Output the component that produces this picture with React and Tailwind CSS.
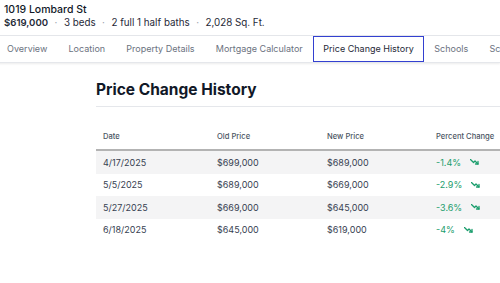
import React from "react";

const tabs = [
  "Overview",
  "Location",
  "Property Details",
  "Mortgage Calculator",
  "Price Change History",
  "Schools",
  "Schools Nearby",
];

const rows = [
  ["4/17/2025", "$699,000", "$689,000", "-1.4%"],
  ["5/5/2025", "$689,000", "$669,000", "-2.9%"],
  ["5/27/2025", "$669,000", "$645,000", "-3.6%"],
  ["6/18/2025", "$645,000", "$619,000", "-4%"],
];

function TrendDown() {
  return (
    <svg width="9" height="6" viewBox="0 0 18 12" fill="none" stroke="currentColor" strokeWidth="2.6" strokeLinecap="round" strokeLinejoin="round">
      <polyline points="1,1 7,7 10,4 16,10" />
      <polyline points="11,10 16,10 16,5" />
    </svg>
  );
}

export default function App() {
  return (
    <div className="w-[500px] h-[283px] overflow-hidden bg-white text-[#1f2937]" style={{ fontFamily: "Inter, 'Noto Sans', sans-serif" }}>
      <div className="h-[36px] border-b border-[#e5e7eb] pl-[4px] pt-[3px]">
        <div className="text-[10.5px] leading-[13px] font-medium text-[#111827]">1019 Lombard St</div>
        <div className="flex items-center text-[9.8px] leading-[13px] text-[#1f2937] whitespace-nowrap">
          <span className="font-semibold text-[9.6px]">$619,000</span>
          <span className="mx-[6.5px] text-[#9ca3af]">·</span>
          <span>3 beds</span>
          <span className="mx-[6.5px] text-[#9ca3af]">·</span>
          <span>2 full 1 half baths</span>
          <span className="mx-[6.5px] text-[#9ca3af]">·</span>
          <span>2,028 Sq. Ft.</span>
        </div>
      </div>
      <div className="h-[27px] flex items-stretch whitespace-nowrap border-b border-[#e5e7eb] shadow-[0_1px_2px_rgba(0,0,0,0.08)] ml-[-3.5px]">
        {tabs.map((t) =>
          t === "Price Change History" ? (
            <div key={t} className="px-[9px] flex items-center border-[1.5px] border-[#3340d0] text-[#1f2937] text-[9px]">
              {t}
            </div>
          ) : (
            <div key={t} className="px-[10.6px] flex items-center text-[#6b7280] text-[9px]">
              {t}
            </div>
          )
        )}
      </div>
      <div className="pl-[96px] pt-[17px]">
        <div className="text-[15.5px] leading-[20px] font-bold text-[#111827] pb-[6px] border-b border-[#e5e7eb]">
          Price Change History
        </div>
        <div className="mt-[18px] w-[460px]">
          <div className="flex h-[26px] items-center border-b-2 border-[#b3b3b3] text-[7.6px] font-medium text-[#4b5563]">
            <div className="w-[121px] pl-[7px]">Date</div>
            <div className="w-[110px]">Old Price</div>
            <div className="w-[109px]">New Price</div>
            <div className="flex-1">Percent Change</div>
          </div>
          {rows.map((r, i) => (
            <div key={i} className={`flex h-[22.5px] items-center text-[9px] text-[#374151] ${i % 2 === 0 ? "bg-[#f4f4f5]" : "bg-white"}`}>
              <div className="w-[121px] pl-[7px]">{r[0]}</div>
              <div className="w-[110px]">{r[1]}</div>
              <div className="w-[109px]">{r[2]}</div>
              <div className="flex-1 flex items-center gap-[9px] text-[#1a9d6c]">
                <span>{r[3]}</span>
                <TrendDown />
              </div>
            </div>
          ))}
        </div>
      </div>
    </div>
  );
}
